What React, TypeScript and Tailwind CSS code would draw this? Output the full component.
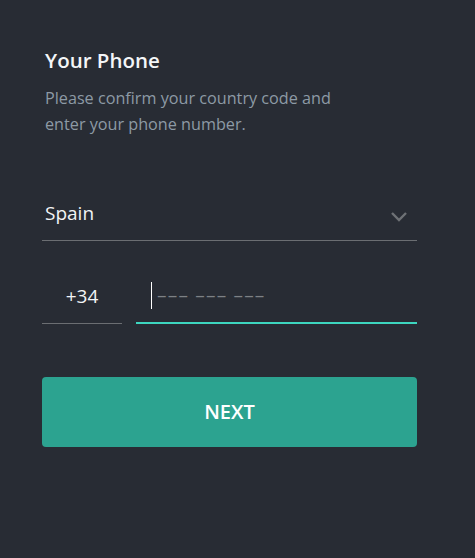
import React from "react";

export default function App() {
  return (
    <div className="w-[475px] h-[558px] bg-[#282c34] text-white" style={{ fontFamily: '"Open Sans", sans-serif' }}>
      <div className="pl-[42px] pr-[58px] pt-[46px]">
        <h1 className="pl-[3px] text-[20.5px] font-semibold leading-[28px] text-[#f4f6f8]">Your Phone</h1>
        <p className="pl-[3px] mt-[11px] text-[16.2px] leading-[26px] text-[#8d9aa5]">
          Please confirm your country code and
          <br />
          enter your phone number.
        </p>
        <div className="mt-[57px] flex items-center justify-between border-b border-[#6b6e72] h-[47px] pb-[8px]">
          <span className="pl-[3px] text-[19px] text-[#f2f4f6]">Spain</span>
          <svg width="18" height="12" viewBox="0 0 18 12" className="mr-[9px] mt-[8px]">
            <path d="M2 2 L9 9 L16 2" fill="none" stroke="#6e7175" strokeWidth="2.4" />
          </svg>
        </div>
        <div className="mt-[34px] flex gap-[14px]">
          <div className="w-[80px] h-[49px] border-b border-[#6b6e72] flex items-center justify-center pb-[6px]">
            <span className="text-[19px] text-[#f2f4f6]">+34</span>
          </div>
          <div className="flex-1 h-[49px] border-b-2 border-[#3dd6bf] flex items-center pl-[15px] pb-[7px]">
            <span className="w-[1px] h-[27px] bg-white mr-[5px]" />
            <span className="text-[19px] text-[#7d8185] tracking-[1.2px]">––– ––– –––</span>
          </div>
        </div>
        <button className="mt-[53px] w-full h-[70px] rounded-[4px] bg-[#2ca390] text-[20px] font-semibold text-white">
          NEXT
        </button>
      </div>
    </div>
  );
}
